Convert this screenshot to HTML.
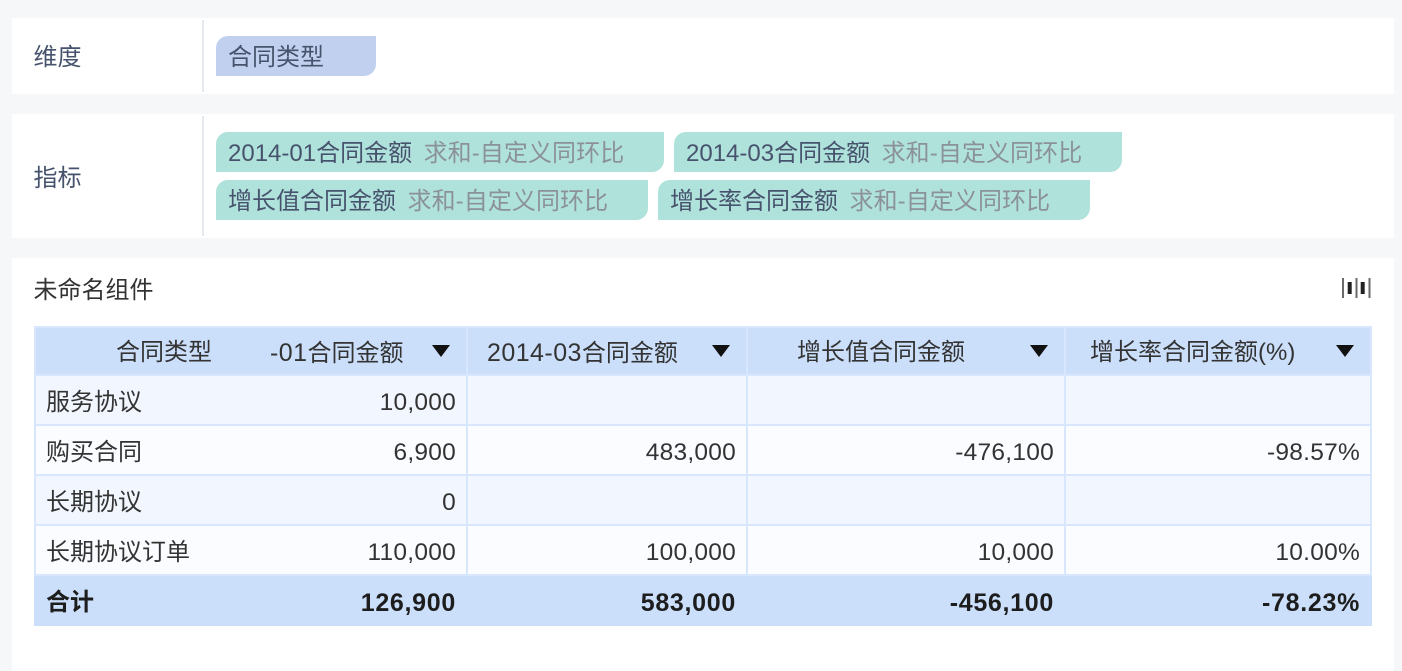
<!DOCTYPE html>
<html lang="zh"><head><meta charset="utf-8"><style>
*{box-sizing:border-box}
html,body{margin:0;padding:0}
body{width:1402px;height:671px;background:#f6f7f9;position:relative;overflow:hidden;font-family:"Liberation Sans","Noto Sans CJK SC",sans-serif}
.a{position:absolute}
.t{position:absolute;white-space:nowrap;font-size:24px;line-height:32px}
.panel{position:absolute;background:#fff;left:12px;width:1382px}
.sep{position:absolute;left:202px;width:2px;background:#e6e9ef}
.lab{color:#47536d;left:33.5px}
.chip{position:absolute;height:40px;border-radius:12px 0 12px 0;color:#47536d;font-size:24px;line-height:44px;white-space:nowrap;padding-left:12px}
.chip span{color:#8b9199;margin-left:11.5px;letter-spacing:.08px}
.g{background:#b0e2dc}
.cell{position:absolute;font-size:24px;line-height:32px;color:#333;white-space:nowrap}
.n{letter-spacing:0}
.d{font-size:25px;letter-spacing:.45px}
.num{font-size:24.5px;letter-spacing:.25px}
.r{text-align:right}
.b{font-weight:bold;color:#1d1d1d}
.num.b{font-size:25px;letter-spacing:.7px}
.tri{position:absolute;top:345px;width:0;height:0;border-left:9px solid transparent;border-right:9px solid transparent;border-top:12px solid #111}
</style></head><body>
<div class="panel" style="top:18px;height:76px"></div>
<div class="sep" style="top:20px;height:72px"></div>
<div class="t lab" style="top:42px">维度</div>
<div class="chip" style="left:216px;top:36px;width:160px;background:#c1d0ef">合同类型</div>

<div class="panel" style="top:114px;height:124px"></div>
<div class="sep" style="top:116px;height:120px"></div>
<div class="t lab" style="top:163px">指标</div>
<div class="chip g" style="left:216px;top:132px;width:448px">2014-01合同金额<span>求和-自定义同环比</span></div>
<div class="chip g" style="left:674px;top:132px;width:448px">2014-03合同金额<span>求和-自定义同环比</span></div>
<div class="chip g" style="left:216px;top:180px;width:432px">增长值合同金额<span>求和-自定义同环比</span></div>
<div class="chip g" style="left:658px;top:180px;width:432px">增长率合同金额<span>求和-自定义同环比</span></div>

<div class="panel" style="top:258px;height:413px"></div>
<div class="t" style="left:33.5px;top:275px;color:#333">未命名组件</div>
<svg class="a" style="left:1341px;top:277px" width="31" height="22" viewBox="0 0 31 22"><g fill="#6a6a6a"><rect x="1" y="1" width="2" height="20"/><rect x="14.500" y="1" width="2" height="20"/><rect x="27.500" y="1" width="2" height="20"/></g><g fill="#222"><rect x="6.700" y="5" width="4" height="12"/><rect x="19.700" y="5" width="4" height="12"/></g></svg>

<div class="a" style="left:34px;top:326px;width:1338px;height:300px;background:#d8e7fd"></div>
<div class="a" style="left:34px;top:326px;width:1338px;height:50px;background:#cbdffb;border:2px solid #d8e7fd"></div>
<div class="a" style="left:36px;top:376px;width:1334px;height:48px;background:#f2f6fe"></div>
<div class="a" style="left:36px;top:426px;width:1334px;height:48px;background:#fafcff"></div>
<div class="a" style="left:36px;top:476px;width:1334px;height:48px;background:#f2f6fe"></div>
<div class="a" style="left:36px;top:526px;width:1334px;height:48px;background:#fafcff"></div>
<div class="a" style="left:466px;top:326px;width:2px;height:250px;background:#d8e7fd"></div>
<div class="a" style="left:746px;top:326px;width:2px;height:250px;background:#d8e7fd"></div>
<div class="a" style="left:1064px;top:326px;width:2px;height:250px;background:#d8e7fd"></div>
<div class="a" style="left:34px;top:576px;width:1338px;height:50px;background:#cbdffb"></div>

<div class="cell n" style="left:116px;top:337px">合同类型</div>
<div class="cell n" style="left:270px;top:337px"><span class="d">-01</span>合同金额</div>
<div class="tri" style="left:432px"></div>
<div class="cell n" style="left:487px;top:337px"><span class="d">2014-03</span>合同金额</div>
<div class="tri" style="left:712px"></div>
<div class="cell n" style="left:797px;top:337px">增长值合同金额</div>
<div class="tri" style="left:1030px"></div>
<div class="cell n" style="left:1090px;top:337px">增长率合同金额(%)</div>
<div class="tri" style="left:1336px"></div>

<div class="cell n" style="left:46px;top:387px">服务协议</div>
<div class="cell n" style="left:46px;top:437px">购买合同</div>
<div class="cell n" style="left:46px;top:487px">长期协议</div>
<div class="cell n" style="left:46px;top:537px">长期协议订单</div>
<div class="cell n b" style="left:46px;top:587px">合计</div>

<div class="cell num r" style="right:946px;top:387px">10,000</div>
<div class="cell num r" style="right:946px;top:437px">6,900</div>
<div class="cell num r" style="right:946px;top:487px">0</div>
<div class="cell num r" style="right:946px;top:537px">110,000</div>
<div class="cell num r b" style="right:946px;top:587px">126,900</div>

<div class="cell num r" style="right:666px;top:437px">483,000</div>
<div class="cell num r" style="right:666px;top:537px">100,000</div>
<div class="cell num r b" style="right:666px;top:587px">583,000</div>

<div class="cell num r" style="right:348px;top:437px">-476,100</div>
<div class="cell num r" style="right:348px;top:537px">10,000</div>
<div class="cell num r b" style="right:348px;top:587px">-456,100</div>

<div class="cell num r" style="right:42px;top:437px">-98.57%</div>
<div class="cell num r" style="right:42px;top:537px">10.00%</div>
<div class="cell num r b" style="right:42px;top:587px">-78.23%</div>
</body></html>
